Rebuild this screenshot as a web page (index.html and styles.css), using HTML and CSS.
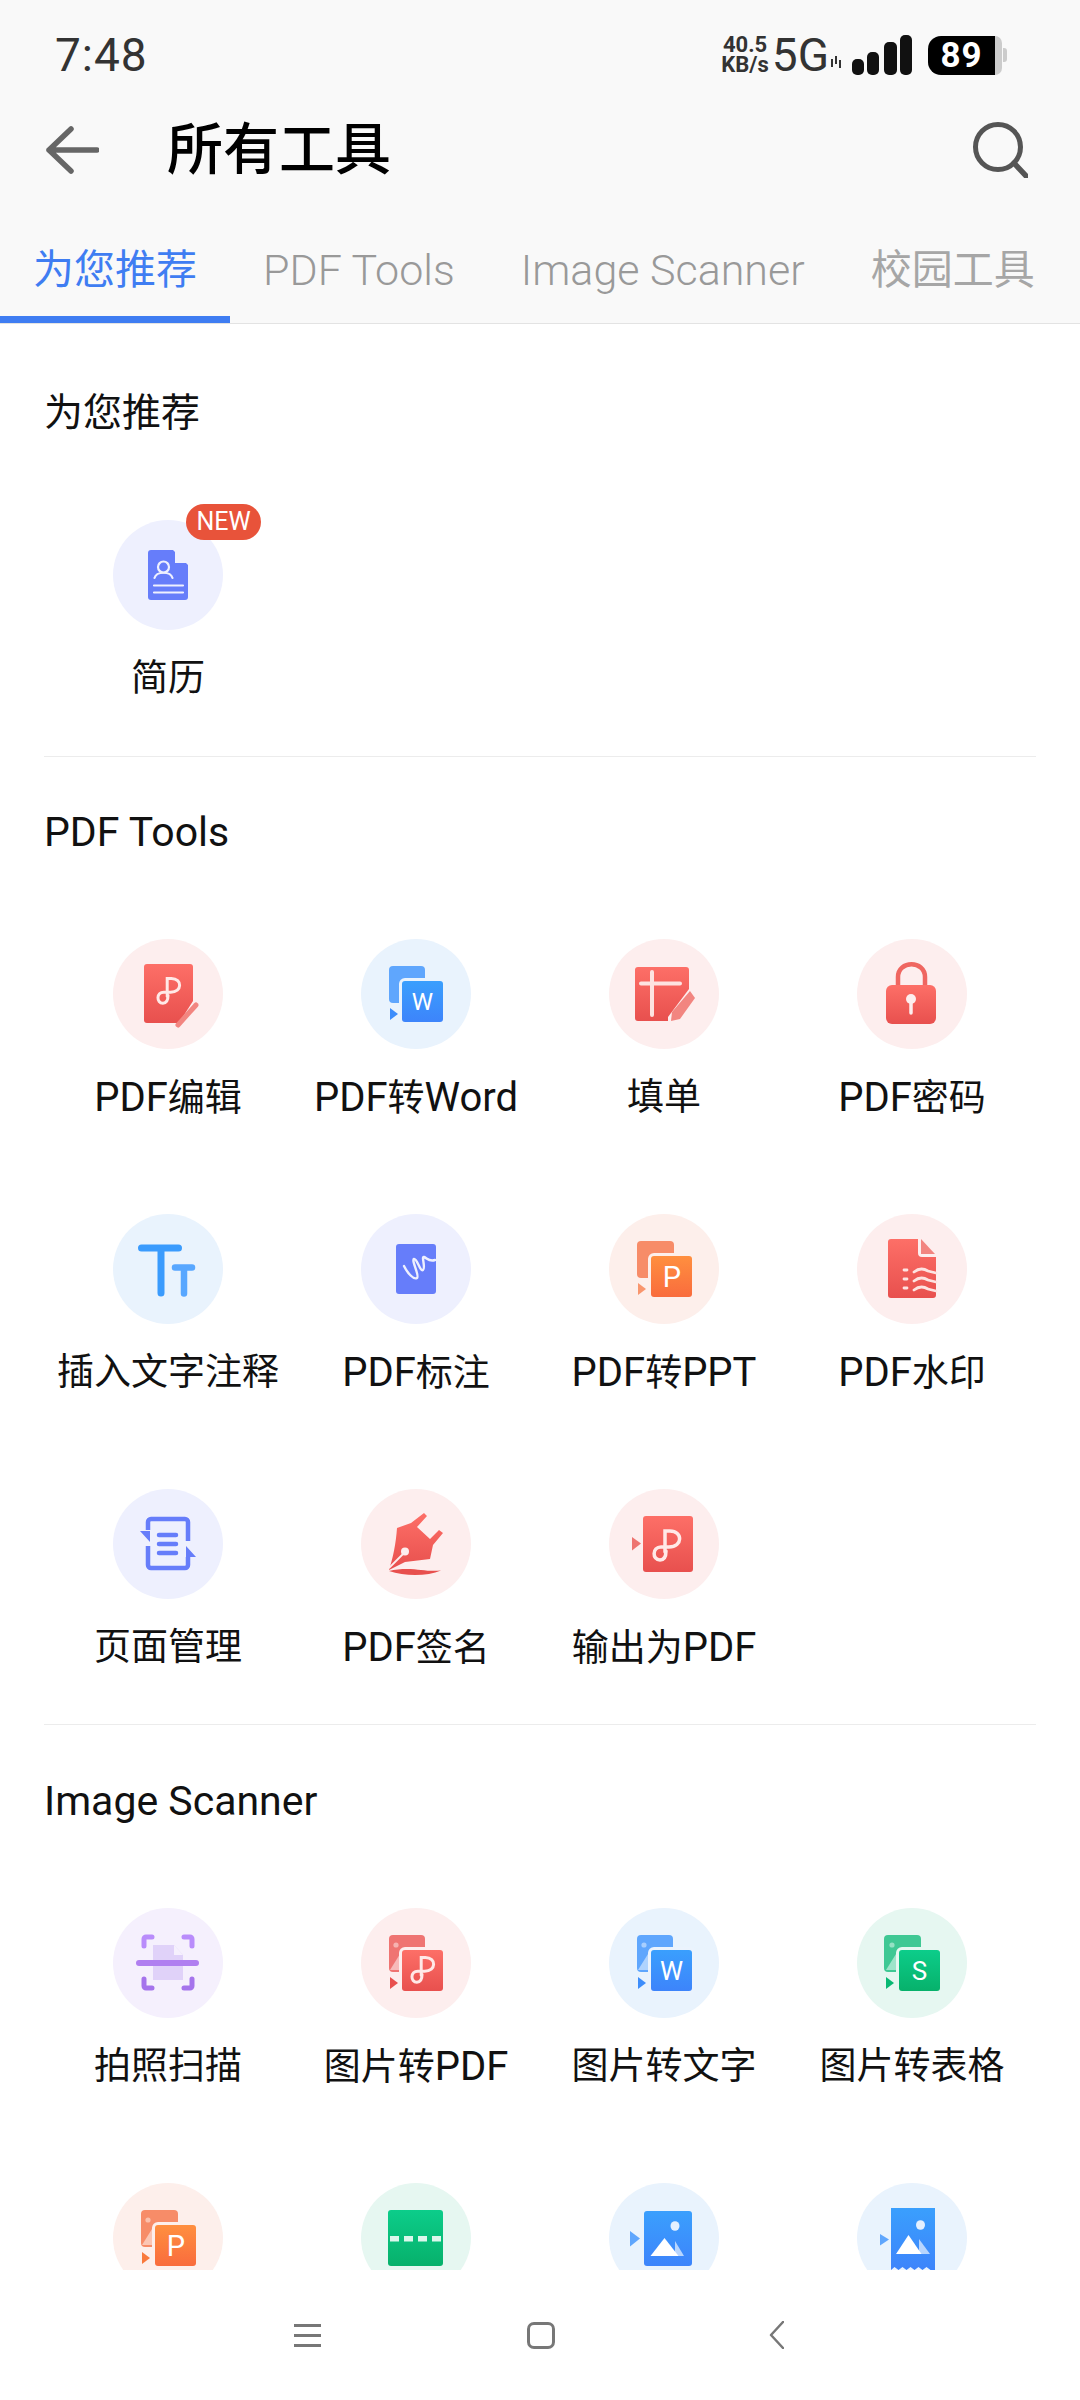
FILE: index.html
```html
<!DOCTYPE html>
<html lang="zh">
<head>
    <meta charset="UTF-8">
    <title>所有工具</title>
    <link rel="stylesheet" href="styles.css">
</head>
<body>
    <svg class="defs" aria-hidden="true">
        <defs>
            <linearGradient id="red" x1="0" y1="0" x2="0" y2="1"><stop offset="0" stop-color="#fd6f67"/><stop offset="1" stop-color="#e8504e"/></linearGradient>
            <linearGradient id="blue" x1="0" y1="0" x2="0" y2="1"><stop offset="0" stop-color="#3a9ffd"/><stop offset="1" stop-color="#3d84fb"/></linearGradient>
            <linearGradient id="orange" x1="0" y1="0" x2="0" y2="1"><stop offset="0" stop-color="#ff8f3f"/><stop offset="1" stop-color="#f96c3d"/></linearGradient>
            <linearGradient id="green" x1="0" y1="0" x2="0" y2="1"><stop offset="0" stop-color="#0ccd8a"/><stop offset="1" stop-color="#07b16b"/></linearGradient>
            <path id="curl" d="M12 24V3h5c13 0 13 16-1 16H8c-9 0-9 13-1 13 6 0 6-6 6-9" fill="none" stroke="#ffe9e7" stroke-width="3.500" stroke-linecap="round"/>
            <path id="mark" d="M29 69l8 6-8 6z"/>
            <g id="photo">
                <circle cx="35" cy="37" r="2.6" fill="#fff" fill-opacity=".45"/>
                <path d="M29 62l10-16 6 16z" fill="#fff" fill-opacity=".5"/>
            </g>
        </defs>
    </svg>

    <div class="top">
        <div class="status">
            <span class="time">7:48</span>
            <div class="status-right">
                <span class="speed">40.5<br>KB/s</span>
                <span class="net">5G</span>
                <svg class="signal" width="84" height="40" viewBox="0 0 84 40">
                    <path d="M2 24v8M6 21v8M10 25v8" stroke="#333" stroke-width="2" fill="none"/>
                    <rect x="22" y="24" width="12" height="16" rx="5"/>
                    <rect x="37" y="17" width="12" height="23" rx="5"/>
                    <rect x="54" y="7" width="13" height="33" rx="5"/>
                    <rect x="70" y="0" width="12" height="40" rx="5"/>
                </svg>
                <div class="battery"><span class="battery-fill">89</span><span class="battery-rest"></span><span class="battery-nub"></span></div>
            </div>
        </div>
        <div class="appbar">
            <svg class="back" width="54" height="48" viewBox="0 0 54 48"><path d="M26 3L4 24l22 21M4 24h48" fill="none" stroke="#666" stroke-width="5.5" stroke-linecap="round" stroke-linejoin="round"/></svg>
            <h1 class="title">所有工具</h1>
            <svg class="search" width="56" height="56" viewBox="0 0 56 56"><circle cx="26" cy="25" r="22.5" fill="none" stroke="#555" stroke-width="5"/><path d="M42 41l12 13" stroke="#555" stroke-width="5.5" stroke-linecap="round"/></svg>
        </div>
        <div class="tabs">
            <div class="tab tab-active">为您推荐</div>
            <div class="tab"><span class="lat">PDF Tools</span></div>
            <div class="tab"><span class="lat">Image Scanner</span></div>
            <div class="tab">校园工具</div>
        </div>
    </div>

    <div class="content">
        <section class="section section-first">
            <h2 class="section-title">为您推荐</h2>
            <div class="grid">
                <div class="tool">
                    <div class="icon c-indigo">
                        <svg viewBox="0 0 110 110">
                            <path d="M38 30h22l15 15v32a3 3 0 0 1-3 3H38a3 3 0 0 1-3-3V33a3 3 0 0 1 3-3z" fill="#667dfa"/>
                            <path d="M62 30l13 13H62z" fill="#eef0fe"/>
                            <circle cx="50.5" cy="47" r="5.5" fill="none" stroke="#eef0fe" stroke-width="2.2"/>
                            <path d="M41.5 58c2-7 16-7 18 0M41 65.500h29M41 72.500h29" fill="none" stroke="#eef0fe" stroke-width="2.2" stroke-linecap="round"/>
                        </svg>
                        <span class="badge">NEW</span>
                    </div>
                    <div class="tool-name">简历</div>
                </div>
            </div>
        </section>

        <section class="section">
            <h2 class="section-title">PDF Tools</h2>
            <div class="grid">
                <div class="tool">
                    <div class="icon c-red">
                        <svg viewBox="0 0 110 110">
                            <path d="M34 25h43a3 3 0 0 1 3 3v34L66 84H34a3 3 0 0 1-3-3V28a3 3 0 0 1 3-3z" fill="url(#red)"/>
                            <use href="#curl" transform="translate(44 37) scale(.85)"/>
                            <path d="M83 66L65 86" stroke="#f28580" stroke-width="5" stroke-linecap="round"/>
                        </svg>
                    </div>
                    <div class="tool-name"><span class="lat">PDF</span>编辑</div>
                </div>
                <div class="tool">
                    <div class="icon c-blue">
                        <svg viewBox="0 0 110 110">
                            <rect x="28" y="27" width="36" height="37" rx="4" fill="#5fa6fd"/>
                            <use href="#mark" fill="#3d8dfb"/>
                            <rect x="41" y="42" width="41" height="41" rx="3" fill="url(#blue)" stroke="#e9f3fd" stroke-width="6" paint-order="stroke"/>
                            <text class="glyph" x="61.500" y="71" font-size="24">W</text>
                        </svg>
                    </div>
                    <div class="tool-name"><span class="lat">PDF</span>转<span class="lat">Word</span></div>
                </div>
                <div class="tool">
                    <div class="icon c-red">
                        <svg viewBox="0 0 110 110">
                            <path d="M29 28h48a3 3 0 0 1 3 3v19L59 78v4H29a3 3 0 0 1-3-3V31a3 3 0 0 1 3-3z" fill="url(#red)"/>
                            <path d="M32 44.500h39M43 33v43" stroke="#fde3e1" stroke-width="4" stroke-linecap="round"/>
                            <path d="M81 52l5 7-15 21-9 2 1-9z" fill="#f28580"/>
                        </svg>
                    </div>
                    <div class="tool-name">填单</div>
                </div>
                <div class="tool">
                    <div class="icon c-red">
                        <svg viewBox="0 0 110 110">
                            <path d="M41 47V38c0-17 27-17 27 0v9" fill="none" stroke="#ef6660" stroke-width="4.500"/>
                            <rect x="29" y="46" width="50" height="39" rx="6" fill="url(#red)"/>
                            <path d="M54 60v14" stroke="#fdeeee" stroke-width="3.500" stroke-linecap="round"/>
                            <circle cx="54" cy="60" r="5" fill="#fdeeee"/>
                        </svg>
                    </div>
                    <div class="tool-name"><span class="lat">PDF</span>密码</div>
                </div>
                <div class="tool">
                    <div class="icon c-blue">
                        <svg viewBox="0 0 110 110">
                            <path d="M28.500 34h37M48 34v45" stroke="#3a9bfd" stroke-width="7" stroke-linecap="round"/>
                            <path d="M62 53.500h17M71 53.500v26" stroke="#58a7ff" stroke-width="6.500" stroke-linecap="round"/>
                        </svg>
                    </div>
                    <div class="tool-name">插入文字注释</div>
                </div>
                <div class="tool">
                    <div class="icon c-indigo">
                        <svg viewBox="0 0 110 110">
                            <rect x="35" y="30" width="40" height="50" rx="3" fill="#667dfa"/>
                            <path d="M43 52c4 8 10 14 13 12 3-2-6-18-3-19 3-1 6 13 9 11 3-2-2-14 1-13 3 1 5 5 11 3" fill="none" stroke="#eef0fe" stroke-width="2.400" stroke-linecap="round"/>
                        </svg>
                    </div>
                    <div class="tool-name"><span class="lat">PDF</span>标注</div>
                </div>
                <div class="tool">
                    <div class="icon c-orange">
                        <svg viewBox="0 0 110 110">
                            <rect x="28" y="27" width="37" height="37" rx="4" fill="#f78c68"/>
                            <use href="#mark" fill="#f9966d"/>
                            <rect x="42" y="42" width="41" height="41" rx="3" fill="url(#orange)" stroke="#fdefeb" stroke-width="6" paint-order="stroke"/>
                            <text class="glyph" x="63" y="73" font-size="29">P</text>
                        </svg>
                    </div>
                    <div class="tool-name"><span class="lat">PDF</span>转<span class="lat">PPT</span></div>
                </div>
                <div class="tool">
                    <div class="icon c-red">
                        <svg viewBox="0 0 110 110">
                            <path d="M34 25h27v14a4 4 0 0 0 4 4h14v38a3 3 0 0 1-3 3H34a3 3 0 0 1-3-3V28a3 3 0 0 1 3-3z" fill="url(#red)"/>
                            <path d="M64 25l14 15H64z" fill="#f28580"/>
                            <path d="M47 56h3M47 65h3M47 74h3M57 58c5-4 9-4 14-1l8 2M57 67c5-4 9-4 14-1l8 2M57 76c5-4 9-4 14-1l8 2" fill="none" stroke="#fde3e1" stroke-width="2.800" stroke-linecap="round"/>
                        </svg>
                    </div>
                    <div class="tool-name"><span class="lat">PDF</span>水印</div>
                </div>
                <div class="tool">
                    <div class="icon c-indigo">
                        <svg viewBox="0 0 110 110">
                            <path d="M35 41v-8a3 3 0 0 1 3-3h34a3 3 0 0 1 3 3v19M35 57v19a3 3 0 0 0 3 3h34a3 3 0 0 0 3-3v-8" fill="none" stroke="#667dfa" stroke-width="4.500"/>
                            <path d="M27 42h10v11zM83 68H73V57z" fill="#667dfa"/>
                            <path d="M46 46h17M46 55h17M46 64h17" stroke="#667dfa" stroke-width="4.500" stroke-linecap="round"/>
                        </svg>
                    </div>
                    <div class="tool-name">页面管理</div>
                </div>
                <div class="tool">
                    <div class="icon c-red">
                        <svg viewBox="0 0 110 110">
                            <path d="M36 39l14-5 13-10 3 3-10 11 13 12 9-9 4 3-10 12-3 14-25 3-16 8c4-12 7-27 8-42z" fill="url(#red)"/>
                            <path d="M28 79l16-16" stroke="#fdeeee" stroke-width="1.800"/>
                            <circle cx="44" cy="62.500" r="4" fill="#fdeeee"/>
                            <path d="M28 82c12-3 24-2 32-1 8 1 14 1 20 .5-14 6-36 6-52 .5z" fill="#e8504e"/>
                        </svg>
                    </div>
                    <div class="tool-name"><span class="lat">PDF</span>签名</div>
                </div>
                <div class="tool">
                    <div class="icon c-red">
                        <svg viewBox="0 0 110 110">
                            <path d="M23 48l9 6.500-9 7z" fill="#ee7470"/>
                            <rect x="34" y="27" width="50" height="56" rx="3" fill="url(#red)"/>
                            <use href="#curl" transform="translate(44 39)"/>
                        </svg>
                    </div>
                    <div class="tool-name">输出为<span class="lat">PDF</span></div>
                </div>
            </div>
        </section>

        <section class="section section-last">
            <h2 class="section-title">Image Scanner</h2>
            <div class="grid">
                <div class="tool">
                    <div class="icon c-purple">
                        <svg viewBox="0 0 110 110">
                            <path d="M40 37h21l9 10v25H40z" fill="#e0d2f9"/>
                            <path d="M61 37l9 10h-9z" fill="#f5f0fd"/>
                            <path d="M31 38v-7a2 2 0 0 1 2-2h6M71 29h6a2 2 0 0 1 2 2v7" fill="none" stroke="#b98cfb" stroke-width="5" stroke-linecap="round"/>
                            <path d="M31 71v7a2 2 0 0 0 2 2h6M71 80h6a2 2 0 0 0 2-2v-7" fill="none" stroke="#a574ec" stroke-width="5" stroke-linecap="round"/>
                            <path d="M26 55h57" stroke="#b07ff0" stroke-width="6" stroke-linecap="round"/>
                        </svg>
                    </div>
                    <div class="tool-name">拍照扫描</div>
                </div>
                <div class="tool">
                    <div class="icon c-red">
                        <svg viewBox="0 0 110 110">
                            <rect x="28" y="27" width="36" height="37" rx="4" fill="#ef7472"/>
                            <use href="#photo"/>
                            <use href="#mark" fill="#e8504e"/>
                            <rect x="41" y="42" width="41" height="41" rx="3" fill="url(#red)" stroke="#fdeeee" stroke-width="6" paint-order="stroke"/>
                            <use href="#curl" transform="translate(50 47) scale(.85)"/>
                        </svg>
                    </div>
                    <div class="tool-name">图片转<span class="lat">PDF</span></div>
                </div>
                <div class="tool">
                    <div class="icon c-blue">
                        <svg viewBox="0 0 110 110">
                            <rect x="28" y="27" width="36" height="37" rx="4" fill="#5fa6fd"/>
                            <use href="#photo"/>
                            <use href="#mark" fill="#3d8dfb"/>
                            <rect x="42" y="42" width="41" height="41" rx="3" fill="url(#blue)" stroke="#ebf3fd" stroke-width="6" paint-order="stroke"/>
                            <text class="glyph" x="62.500" y="72" font-size="26">W</text>
                        </svg>
                    </div>
                    <div class="tool-name">图片转文字</div>
                </div>
                <div class="tool">
                    <div class="icon c-green">
                        <svg viewBox="0 0 110 110">
                            <rect x="27" y="27" width="37" height="37" rx="4" fill="#3fc894"/>
                            <use href="#photo"/>
                            <use href="#mark" fill="#08b873"/>
                            <rect x="42" y="42" width="41" height="41" rx="3" fill="url(#green)" stroke="#e6f7f1" stroke-width="6" paint-order="stroke"/>
                            <text class="glyph" x="62.500" y="72" font-size="26">S</text>
                        </svg>
                    </div>
                    <div class="tool-name">图片转表格</div>
                </div>
                <div class="tool">
                    <div class="icon c-orange">
                        <svg viewBox="0 0 110 110">
                            <rect x="28" y="27" width="37" height="37" rx="4" fill="#f78c68"/>
                            <use href="#photo"/>
                            <use href="#mark" fill="#f97a3d"/>
                            <rect x="42" y="42" width="41" height="41" rx="3" fill="url(#orange)" stroke="#fdefeb" stroke-width="6" paint-order="stroke"/>
                            <text class="glyph" x="63" y="73" font-size="29">P</text>
                        </svg>
                    </div>
                </div>
                <div class="tool">
                    <div class="icon c-green">
                        <svg viewBox="0 0 110 110">
                            <rect x="27" y="27" width="55" height="56" rx="3" fill="url(#green)"/>
                            <path d="M29 53h9v5.500h-9zM43 53h9v5.500h-9zM57 53h9v5.500h-9zM71 53h9v5.500h-9z" fill="#dcf7ec"/>
                        </svg>
                    </div>
                </div>
                <div class="tool">
                    <div class="icon c-blue">
                        <svg viewBox="0 0 110 110">
                            <path d="M21 48l10 7.500-10 8z" fill="#5fa6fd"/>
                            <rect x="35" y="28" width="48" height="55" rx="3" fill="url(#blue)"/>
                            <ellipse cx="66" cy="43" rx="4.500" ry="4.800" fill="#e4f0ff"/>
                            <path d="M66 58l9 15H66z" fill="#b7d5fe"/>
                            <path d="M55.500 55l14 18h-28z" fill="#fff"/>
                        </svg>
                    </div>
                </div>
                <div class="tool">
                    <div class="icon c-blue">
                        <svg viewBox="0 0 110 110">
                            <path d="M23 51l9 5.500-9 6z" fill="#5fa6fd"/>
                            <path d="M34 25h44v62H34z" fill="url(#blue)"/>
                            <ellipse cx="63.500" cy="42" rx="4.500" ry="4.800" fill="#e4f0ff"/>
                            <path d="M62 56l11 15H62z" fill="#b7d5fe"/>
                            <path d="M51.500 52l13 19H39z" fill="#fff"/>
                            <path d="M34 87l3.500-3 4 3 4-3 4 3 4-3 4 3 4-3 4 3 4-3 4 3z" fill="#ebf3fd"/>
                        </svg>
                    </div>
                </div>
            </div>
        </section>
    </div>

    <nav class="navbar">
        <div class="nav-menu"><span></span><span></span><span></span></div>
        <div class="nav-home"></div>
        <svg class="nav-back" width="15" height="28" viewBox="0 0 15 28"><path d="M14 1L2 14l12 13" fill="none" stroke="#777" stroke-width="2.500" stroke-linecap="round" stroke-linejoin="round"/></svg>
    </nav>
</body>
</html>
```

FILE: styles.css
```css
* { box-sizing: border-box; }
html, body { margin: 0; padding: 0; }
body {
    width: 1080px;
    height: 2400px;
    overflow: hidden;
    background: #fff;
    color: #111;
    font-family: Roboto, "Noto Sans CJK SC", sans-serif;
}
.defs { position: absolute; width: 0; height: 0; }

.top { background: #f9f9f9; }
.status {
    height: 100px;
    padding: 10px 73px 0 55px;
    display: flex;
    justify-content: space-between;
    align-items: center;
}
.time { font-size: 46px; color: #333; letter-spacing: 1px; }
.status-right { display: flex; align-items: center; }
.speed { font-size: 22px; line-height: 20px; font-weight: 700; color: #333; text-align: center; }
.net { font-size: 46px; color: #333; margin-left: 3px; }
.signal { margin-left: 1px; fill: #111; }
.battery { display: flex; align-items: center; margin-left: 14px; }
.battery-fill {
    width: 67px;
    height: 39px;
    background: #000;
    color: #fff;
    border-radius: 13px 0 0 13px;
    font-size: 35px;
    font-weight: 700;
    line-height: 39px;
    text-align: center;
    letter-spacing: 1px;
}
.battery-rest { width: 7px; height: 39px; background: #ccc; border-radius: 0 12px 12px 0; }
.battery-nub { width: 4px; height: 14px; margin-left: 1px; background: #ccc; border-radius: 0 3px 3px 0; }

.appbar {
    height: 100px;
    padding: 0 52px 0 45px;
    display: flex;
    align-items: center;
}
.back { flex: none; }
.title {
    margin: 0 0 12px 68px;
    font-size: 56px;
    font-weight: 500;
    color: #000;
    flex: 1;
}

.tabs {
    height: 124px;
    display: flex;
    overflow: hidden;
    border-bottom: 1px solid #e3e3e3;
}
.tab {
    height: 124px;
    padding: 46px 33px 0;
    font-size: 41px;
    line-height: 48px;
    color: #a6a6a6;
    white-space: nowrap;
}
.tab .lat { font-size: 43px; font-weight: 300; color: #999; }
.tab-active {
    color: #3f7df2;
    border-bottom: 8px solid #3f7df2;
}

.content { height: 1946px; overflow: hidden; }
.section {
    margin: 0 44px;
    padding: 45px 0 51px;
    border-bottom: 1px solid #ececec;
}
.section-first { padding: 59px 0 52px; }
.section-last { border-bottom: none; padding-top: 46px; }
.section-title {
    margin: 0 0 77px;
    height: 60px;
    font-size: 41px;
    line-height: 60px;
    font-weight: 400;
    color: #111;
}
.section-first .section-title { font-size: 39px; }
.grid {
    display: grid;
    grid-template-columns: repeat(4, 248px);
    row-gap: 91px;
}
.tool { display: flex; flex-direction: column; align-items: center; }
.icon {
    position: relative;
    width: 110px;
    height: 110px;
    border-radius: 50%;
}
.icon svg { display: block; width: 110px; height: 110px; }
.c-indigo { background: #eef0fe; }
.c-red { background: #fdeeee; }
.c-blue { background: #e9f3fd; }
.c-orange { background: #fdefeb; }
.c-green { background: #e6f7f1; }
.c-purple { background: #f5f0fd; }
.glyph {
    fill: #fff;
    font-family: Roboto, sans-serif;
    font-weight: 400;
    text-anchor: middle;
}
.badge {
    position: absolute;
    left: 73px;
    top: -16px;
    width: 75px;
    height: 36px;
    border-radius: 18px;
    background: #e8533a;
    color: #fff;
    font-size: 25px;
    line-height: 36px;
    text-align: center;
}
.tool-name {
    margin-top: 24px;
    height: 50px;
    font-size: 37px;
    line-height: 50px;
    white-space: nowrap;
    color: #111;
}
.tool-name .lat { font-size: 40px; }

.navbar {
    height: 130px;
    background: #fff;
    display: flex;
    align-items: center;
    padding-left: 294px;
}
.nav-menu { width: 27px; height: 23px; display: flex; flex-direction: column; justify-content: space-between; }
.nav-menu span { height: 3px; background: #777; }
.nav-home {
    width: 28px;
    height: 27px;
    margin-left: 206px;
    border: 3px solid #777;
    border-radius: 7px;
}
.nav-back { margin-left: 214px; }
```
